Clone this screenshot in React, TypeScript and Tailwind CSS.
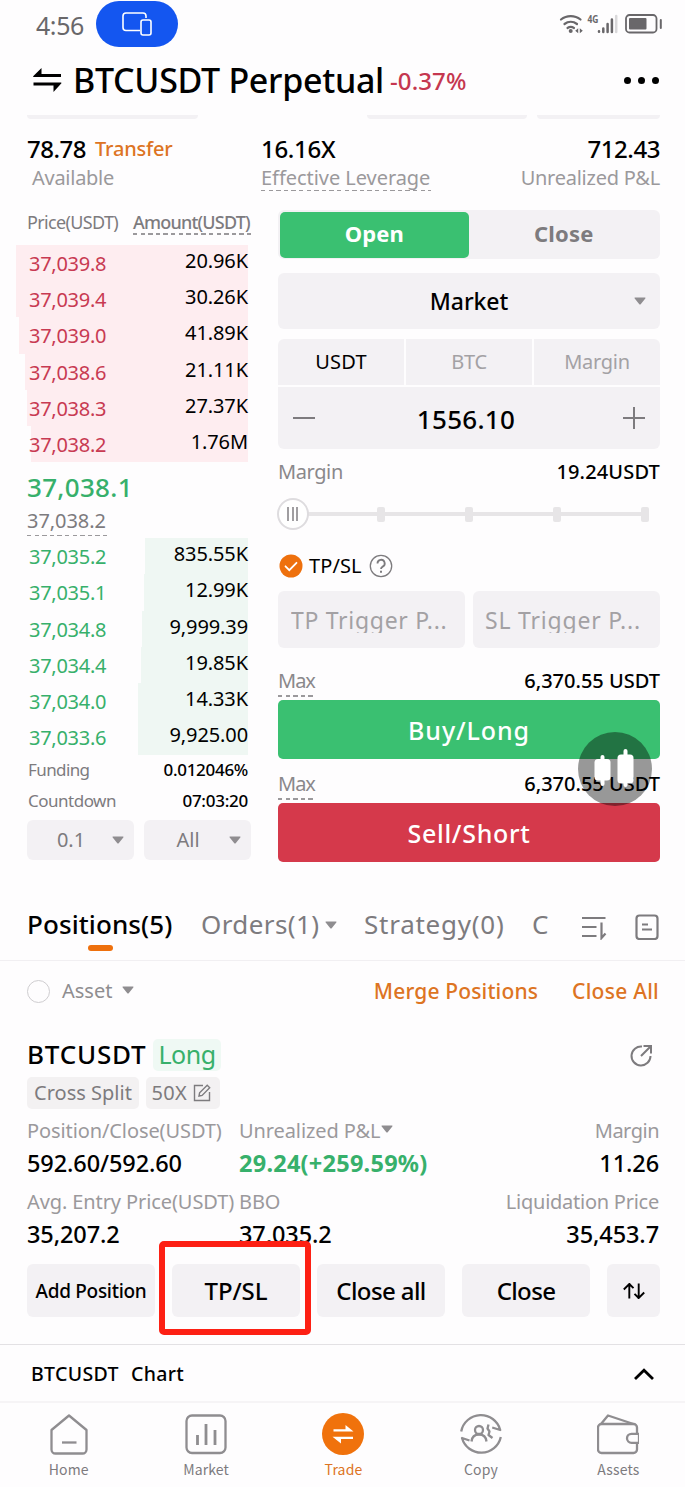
/**
 * Perpetual futures trading screen: order book, order form, open position
 * card and the bottom navigation.
 */
import type { ReactNode } from 'react'
import clsx from 'clsx'

type BookRow = { price: string; amount: string; bar: string }

const ASKS: BookRow[] = [
  { price: '37,039.8', amount: '20.96K', bar: 'w-[232px]' },
  { price: '37,039.4', amount: '30.26K', bar: 'w-[232px]' },
  { price: '37,039.0', amount: '41.89K', bar: 'w-[229px]' },
  { price: '37,038.6', amount: '21.11K', bar: 'w-[223px]' },
  { price: '37,038.3', amount: '27.37K', bar: 'w-[221px]' },
  { price: '37,038.2', amount: '1.76M', bar: 'w-[217px]' },
]

const BIDS: BookRow[] = [
  { price: '37,035.2', amount: '835.55K', bar: 'w-[103px]' },
  { price: '37,035.1', amount: '12.99K', bar: 'w-[104px]' },
  { price: '37,034.8', amount: '9,999.39', bar: 'w-[106px]' },
  { price: '37,034.4', amount: '19.85K', bar: 'w-[107px]' },
  { price: '37,034.0', amount: '14.33K', bar: 'w-[110px]' },
  { price: '37,033.6', amount: '9,925.00', bar: 'w-[110px]' },
]

const UNITS = ['USDT', 'BTC', 'Margin']

function Dashes({ className }: { className?: string }) {
  return (
    <span
      className={clsx(
        'absolute left-0 h-[1.5px] bg-[repeating-linear-gradient(90deg,#9b999c_0_4.4px,transparent_4.4px_7.6px)]',
        className,
      )}
    />
  )
}

function Caret({ className }: { className?: string }) {
  return (
    <svg viewBox="0 0 12 8" className={clsx('h-2 w-3 shrink-0 fill-[#8f8d90]', className)}>
      <path d="M1.2.5h9.6c.6 0 .9.6.5 1L6.7 7.2c-.4.4-1 .4-1.4 0L.7 1.5C.3 1.1.6.5 1.2.5z" />
    </svg>
  )
}

function Book({ rows, side }: { rows: BookRow[]; side: 'ask' | 'bid' }) {
  return (
    <div className="-ml-[11px] w-[232px]">
      {rows.map((r) => (
        <div key={r.price} className="relative flex h-[36.2px] items-center justify-between">
          <span
            className={clsx('absolute inset-y-0 right-0', r.bar, side === 'ask' ? 'bg-[#feedf0]' : 'bg-[#eff7f3]')}
          />
          <span
            className={clsx(
              'relative mt-[2px] pl-[13px] text-[20px] tracking-[-0.27px]',
              side === 'ask' ? 'text-[#c83a52]' : 'text-[#37b06b]',
            )}
          >
            {r.price}
          </span>
          <span className="relative -mt-[4px] text-[20px] tracking-[-0.1px] text-black">{r.amount}</span>
        </div>
      ))}
    </div>
  )
}

function StatusBar() {
  return (
    <div className="flex h-[50px] items-start pr-[22px] pl-[36px]">
      <span className="h-[50px] w-[60px] text-[25px] leading-[50px] tracking-[-0.43px] text-[#69676a]">4:56</span>
      <span className="mt-[1px] flex h-[45.5px] w-[82px] items-center justify-center rounded-full bg-[#1456f0]">
        <svg viewBox="0 0 30 24" className="h-6 w-[30px]" fill="none" stroke="#fff" strokeWidth="1.6">
          <path d="M18 18.5H4A3 3 0 0 1 1 15.5V4a3 3 0 0 1 3-3h17a3 3 0 0 1 3 3v2" />
          <rect x="19" y="8" width="10" height="15" rx="2" />
        </svg>
      </span>
      <svg viewBox="0 0 106 24" className="mt-[12px] ml-auto h-6 w-[106px]" fill="none" stroke="#69676a">
        <g strokeWidth="2.2" strokeLinecap="round">
          <path d="M4 7.5a15.5 15.5 0 0 1 19.5 0" />
          <path d="M7.5 12a10.5 10.5 0 0 1 12.5 0" />
          <path d="M10.5 16a6 6 0 0 1 6.5 0" />
        </g>
        <circle cx="13.7" cy="19" r="2" fill="#69676a" stroke="none" />
        <path d="M21.2 16.2v5l-3-2.5zM22.8 16.2v5l3-2.5z" fill="#69676a" stroke="none" />
        <text x="30.5" y="11" fill="#69676a" stroke="none" fontSize="10.5" fontWeight="700" textLength="11" lengthAdjust="spacingAndGlyphs">
          4G
        </text>
        <g strokeWidth="2.5" strokeLinecap="round">
          <path d="M42 19.2v.6M46.3 16.5v3.5M50.6 12v8M54.9 7.5v12.5" />
          <path d="M59.2 4v16" stroke="#d9d8da" />
        </g>
        <rect x="69" y="3" width="30.5" height="17.5" rx="3.5" strokeWidth="1.8" />
        <rect x="72" y="6" width="17.5" height="11.5" rx="1" fill="#69676a" stroke="none" />
        <path d="M103.8 8v8" strokeWidth="2" strokeLinecap="round" />
      </svg>
    </div>
  )
}

function Header() {
  return (
    <div className="flex h-[65px] items-center pr-[26px] pb-[5px] pl-[33px]">
      <svg viewBox="0 0 29 26" className="h-[26px] w-[29px]" fill="#000">
        <path d="M8.5 1v6H28v3H.8c-.6 0-.9-.7-.4-1.1z" />
        <path d="M20.5 25v-6.5H.5v-3h27.3c.6 0 .9.7.4 1.1z" />
      </svg>
      <h1 className="ml-[11px] w-[312px] text-[34px] leading-none font-[480] tracking-[-0.3px] whitespace-nowrap">
        BTCUSDT Perpetual
      </h1>
      <span className="mt-[2px] ml-[5px] text-[24px] leading-none font-[480] tracking-[0.1px] text-[#c5374f]">-0.37%</span>
      <span className="mt-[1px] ml-auto flex gap-[7px]">
        <i className="size-[7px] rounded-full bg-black" />
        <i className="size-[7px] rounded-full bg-black" />
        <i className="size-[7px] rounded-full bg-black" />
      </span>
    </div>
  )
}

function Summary() {
  return (
    <div className="grid h-[76px] grid-cols-[234px_1fr_auto] pr-[25px] pl-[27px]">
      <div>
        <div className="mt-[15px] flex h-[30px] items-center">
          <span className="w-[60px] text-[24px] font-[480] tracking-[-0.5px]">78.78</span>
          <span className="ml-[8px] text-[20px] font-[480] tracking-[-0.2px] text-[#dd7423]">Transfer</span>
        </div>
        <div className="pl-[5px] text-[20px] leading-[27px] tracking-[-0.27px] text-[#9b999c]">Available</div>
      </div>
      <div>
        <div className="mt-[15px] h-[30px] text-[24px] leading-[30px] font-[480] tracking-[-0.3px]">16.16X</div>
        <span className="relative inline-block text-[20px] leading-[27px] tracking-[-0.05px] text-[#9b999c]">
          Effective Leverage
          <Dashes className="top-[25.5px] w-[170px]" />
        </span>
      </div>
      <div className="text-right">
        <div className="mt-[15px] h-[30px] text-[24px] leading-[30px] font-[480] tracking-[-0.45px]">712.43</div>
        <div className="text-[20px] leading-[27px] tracking-[-0.25px] text-[#9b999c]">Unrealized P&amp;L</div>
      </div>
    </div>
  )
}

function OrderBook() {
  return (
    <div className="w-[224px]">
      <div className="flex h-[35px] justify-between pt-[1px] text-[18px] leading-[23px] text-[#7d7b7e]">
        <span className="tracking-[-0.65px]">Price(USDT)</span>
        <span className="relative w-[118px] font-[480] tracking-[-0.8px]">
          Amount(USDT)
          <Dashes className="top-[22px] w-[118px]" />
        </span>
      </div>
      <Book rows={ASKS} side="ask" />
      <div className="h-[76px] pt-[7px]">
        <div className="text-[26px] leading-[36px] font-[480] tracking-[0.3px] text-[#37b06b]">37,038.1</div>
        <div className="relative w-[80px] text-[20px] leading-[31px] tracking-[-0.05px] text-[#7d7b7e]">
          37,038.2
          <Dashes className="top-[29.5px] w-[80px]" />
        </div>
      </div>
      <Book rows={BIDS} side="bid" />
      <div className="flex h-[29px] items-center justify-between pr-[3px] text-[17px]">
        <span className="ml-[1px] tracking-[-0.6px] text-[#7d7b7e]">Funding</span>
        <span className="font-[480] tracking-[-0.3px]">0.012046%</span>
      </div>
      <div className="flex h-[32px] items-center justify-between pr-[3px] text-[17px]">
        <span className="ml-[1px] tracking-[-0.5px] text-[#7d7b7e]">Countdown</span>
        <span className="font-[480] tracking-[-0.25px]">07:03:20</span>
      </div>
      <div className="mt-[4px] flex gap-[10px] text-[20px] text-[#7d7b7e]">
        <div className="relative flex h-[40px] w-[107px] items-center justify-center rounded-md bg-[#f3f1f4] pr-[19px]">
          0.1
          <Caret className="absolute right-[10px]" />
        </div>
        <div className="relative flex h-[40px] w-[107px] items-center justify-center rounded-md bg-[#f3f1f4] pr-[19px]">
          All
          <Caret className="absolute right-[10px]" />
        </div>
      </div>
    </div>
  )
}

function MaxLine() {
  return (
    <div className="flex h-[37px] justify-between text-[20px] leading-[36px]">
      <span className="relative tracking-[-1px] text-[#8a888b]">
        Max
        <Dashes className="top-[32px] w-[35px]" />
      </span>
      <span className="font-[480]">6,370.55 USDT</span>
    </div>
  )
}

function OrderForm() {
  return (
    <div className="w-[382px]">
      <div className="grid h-[49px] grid-cols-2 rounded-md bg-[#f3f1f4] p-[1.5px] text-center text-[22px] leading-[43px] font-bold">
        <span className="rounded-[5px] bg-[#3ac071] tracking-[0.1px] text-white">Open</span>
        <span className="tracking-[0.2px] text-[#7d7b7e]">Close</span>
      </div>

      <div className="relative mt-[14px] flex h-[56px] items-center justify-center rounded-md bg-[#f3f1f4] text-[23px] font-[480] tracking-[-0.1px]">
        Market
        <Caret className="absolute right-[14px]" />
      </div>

      <div className="mt-[10px] grid h-[46px] grid-cols-3 gap-[2px] overflow-hidden rounded-t-md text-center text-[20px] leading-[46px]">
        {UNITS.map((u, i) => (
          <span
            key={u}
            className={clsx('bg-[#f3f1f4]', i === 0 ? 'tracking-[0.2px] text-black' : 'tracking-[-0.3px] text-[#a3a1a4]')}
          >
            {u}
          </span>
        ))}
      </div>
      <div className="mt-[2px] flex h-[62px] items-center justify-between rounded-b-md bg-[#f3f1f4] px-[15px] text-[26px] font-[480] tracking-[0.3px]">
        <svg viewBox="0 0 22 22" className="size-[22px]" stroke="#7d7b7e" strokeWidth="2">
          <path d="M0 11h22" />
        </svg>
        <span className="mr-[6px] pt-[2px]">1556.10</span>
        <svg viewBox="0 0 22 22" className="size-[22px]" stroke="#7d7b7e" strokeWidth="2">
          <path d="M0 11h22M11 0v22" />
        </svg>
      </div>

      <div className="mt-[6px] flex h-[33px] items-center justify-between text-[20px]">
        <span className="tracking-[-0.4px] text-[#8a888b]">Margin</span>
        <span className="font-[480] tracking-[0.15px]">19.24USDT</span>
      </div>

      <div className="relative mt-[9px] flex h-[34px] items-center">
        <span className="absolute right-[12px] left-[20px] h-[4px] bg-[#e7e5e7]" />
        <div className="relative flex w-[371px] items-center justify-between">
          <span className="-ml-[1.5px] flex size-8 items-center justify-center gap-[2.5px] rounded-full border-2 border-[#dedcdf] bg-white">
            <i className="h-[14px] w-[2px] bg-[#a09ea1]" />
            <i className="h-[14px] w-[2px] bg-[#a09ea1]" />
            <i className="h-[14px] w-[2px] bg-[#a09ea1]" />
          </span>
          <i className="-ml-[12px] h-[15px] w-[8px] rounded-[2px] bg-[#e7e5e7]" />
          <i className="h-[15px] w-[8px] rounded-[2px] bg-[#e7e5e7]" />
          <i className="h-[15px] w-[8px] rounded-[2px] bg-[#e7e5e7]" />
          <i className="h-[15px] w-[8px] rounded-[2px] bg-[#e7e5e7]" />
        </div>
      </div>

      <div className="mt-[19px] flex h-[32px] items-center">
        <svg viewBox="0 0 24 24" className="ml-[1px] size-6" fill="none">
          <circle cx="12" cy="12" r="11.5" fill="#ee700d" />
          <path d="M6.5 12.3l3.8 3.8 7.2-7.3" stroke="#fff" strokeWidth="1.8" strokeLinecap="round" />
        </svg>
        <span className="ml-[6px] text-[20px] tracking-[0.1px]">TP/SL</span>
        <svg viewBox="0 0 24 24" className="ml-[7px] size-6" fill="none" stroke="#7d7b7e">
          <circle cx="12" cy="12" r="10.7" strokeWidth="1.3" />
          <path d="M8.5 9.5a3.6 3.6 0 1 1 5.2 3.1c-1.2.7-1.7 1.1-1.7 2.5" strokeWidth="1.8" />
          <path d="M12 16.7v2" strokeWidth="2" />
        </svg>
      </div>

      <div className="mt-[9px] grid h-[57px] grid-cols-2 gap-2 text-[23px] text-[#a3a1a4]">
        <div className="flex items-center rounded-md bg-[#f3f1f4] pl-[13px]">
          <span className="h-[27px] overflow-hidden pt-[1px] leading-[27px] tracking-[0.7px]">TP Trigger P...</span>
        </div>
        <div className="flex items-center rounded-md bg-[#f3f1f4] pl-[12px]">
          <span className="h-[27px] overflow-hidden pt-[1px] leading-[27px] tracking-[0.8px]">SL Trigger P...</span>
        </div>
      </div>

      <div className="relative mt-[15px]">
        <MaxLine />
        <div className="h-[59px] rounded-[5px] bg-[#3ac071] text-center text-[25px] leading-[60px] font-[480] tracking-[0.9px] text-white">
          Buy/Long
        </div>
        <div className="mt-[7px]">
          <MaxLine />
        </div>
        <div className="h-[59px] rounded-[5px] bg-[#d5394b] text-center text-[25px] leading-[60px] font-[480] tracking-[0.7px] text-white">
          Sell/Short
        </div>
        {/* floating chart shortcut */}
        <div className="absolute top-[69px] right-[8px] size-[74px] rounded-full bg-black/40">
          <svg viewBox="0 0 74 74" className="size-[74px]" fill="#fff">
            <rect x="16.5" y="27" width="16" height="21.5" rx="3.5" />
            <rect x="22.5" y="23" width="4" height="31" rx="2" />
            <rect x="39.5" y="22.5" width="16" height="29" rx="3.5" />
            <rect x="45.5" y="17" width="4" height="38" rx="2" />
          </svg>
        </div>
      </div>
    </div>
  )
}

function PositionTabs() {
  return (
    <div className="mt-[34px] flex h-[66px] border-b border-[#f1eff2] pl-[27px] text-[26px] leading-[58px] text-[#7d7b7e]">
      <span className="relative w-[148px] font-[480] tracking-[0.1px] text-black">
        Positions(5)
        <i className="absolute top-[50px] left-[61px] h-[5.5px] w-[25px] rounded-full bg-[#ee700d]" />
      </span>
      <span className="ml-[26px] w-[119px] tracking-[0.4px]">Orders(1)</span>
      <Caret className="mt-[26px] ml-[5px]" />
      <span className="ml-[27px] w-[142px] tracking-[0.75px]">Strategy(0)</span>
      <span className="ml-[26px] w-[17px] overflow-hidden">C</span>
      <svg viewBox="0 0 26 24" className="mt-[21px] ml-[32px] h-6 w-[26px]" fill="none" stroke="#7d7b7e" strokeWidth="2.2">
        <path d="M1 2h23.5M1 11h14.5M1 20h14.5M20.500 6.5v15.5l4-4.5" />
      </svg>
      <svg viewBox="0 0 24 26" className="mt-[19px] ml-[28px] h-[26px] w-6" fill="none" stroke="#7d7b7e" strokeWidth="2.2">
        <rect x="1.5" y="1.5" width="21" height="23.5" rx="3" />
        <path d="M7 10.500h6M7 15.500h10" />
      </svg>
    </div>
  )
}

type StatProps = { label: ReactNode; value: string; className?: string; valueClass?: string }

function Stat({ label, value, className, valueClass }: StatProps) {
  return (
    <div className={className}>
      <div className="h-[29px] text-[20px] leading-[28px] tracking-[-0.1px] text-[#9b999c]">{label}</div>
      <div className={clsx('h-[36px] text-[23.5px] leading-[35px]', valueClass ?? 'font-[480] tracking-[-0.1px]')}>
        {value}
      </div>
    </div>
  )
}

function PositionCard() {
  return (
    <div className="pr-[25px] pl-[27px]">
      <div className="flex h-[60px] items-center">
        <span className="size-[23px] rounded-full border-[1.5px] border-[#cfcdd0]" />
        <span className="ml-[12px] text-[20px] text-[#8f8d90]">Asset</span>
        <Caret className="-mt-[2px] ml-[10px]" />
        <span className="mt-[2px] ml-auto text-[21px] font-[480] tracking-[0.15px] text-[#dd7423]">Merge Positions</span>
        <span className="mt-[2px] mr-[1px] ml-[34px] text-[21px] font-[480] tracking-[0.25px] text-[#dd7423]">Close All</span>
      </div>

      <div className="mt-[18px] flex h-[32px] items-center">
        <span className="-mt-[2px] w-[126px] text-[26px] font-[480] tracking-[0.8px]">BTCUSDT</span>
        <span className="flex h-[32px] w-[68px] items-center justify-center rounded-[5px] bg-[#eff9f4] text-[25px] tracking-[-0.5px] text-[#37b06b]">
          Long
        </span>
        <svg viewBox="0 0 24 24" className="mt-[2px] mr-[7px] ml-auto size-6" fill="none" stroke="#7d7b7e" strokeWidth="2">
          <path d="M13 2.5a9.5 9.5 0 1 0 8.5 9.5" />
          <path d="M12 12l9-9M14.5 2H22v7.5" />
        </svg>
      </div>

      <div className="mt-[6px] flex gap-[6.5px] text-[20px] leading-[32px] text-[#7d7b7e]">
        <span className="h-[32px] w-[112px] rounded-[5px] bg-[#f3f1f2] text-center">Cross Split</span>
        <span className="flex h-[32px] w-[74px] items-center rounded-[5px] bg-[#f3f1f2] pl-[6px] tracking-[0.3px]">
          50X
          <svg viewBox="0 0 18 18" className="ml-[6px] size-[18px]" fill="none" stroke="#7d7b7e" strokeWidth="1.4">
            <path d="M10 1.5H1.5v15h15V8" />
            <path d="M6 12l.6-3.200L14.2 1.2l2.5 2.5L9.1 11.4z" />
          </svg>
        </span>
      </div>

      <div className="mt-[8px] grid h-[71px] grid-cols-[212px_1fr_auto]">
        <Stat label="Position/Close(USDT)" value="592.60/592.60" />
        <Stat
          label={
            <span className="flex items-center gap-[1px]">
              Unrealized P&amp;L <Caret className="-mt-1" />
            </span>
          }
          value="29.24(+259.59%)"
          valueClass="font-bold tracking-[0.25px] text-[#37b06b]"
        />
        <Stat className="pr-[1px] text-right" label={<span className="tracking-[-0.5px]">Margin</span>} value="11.26" />
      </div>
      <div className="grid h-[76px] grid-cols-[212px_1fr_auto]">
        <Stat className="whitespace-nowrap" label="Avg. Entry Price(USDT)" value="35,207.2" />
        <Stat label="BBO" value="37,035.2" />
        <Stat
          className="pr-[1px] text-right"
          label={<span className="tracking-[-0.25px]">Liquidation Price</span>}
          value="35,453.7"
        />
      </div>

      <div className="flex h-[53px] justify-between text-center text-[24px] leading-[54px] font-[480]">
        <span className="w-[128px] rounded-md bg-[#f3f1f4] text-[19px] tracking-[-0.3px]">Add Position</span>
        <span className="relative w-[128px] rounded-md bg-[#f3f1f4] tracking-[-0.1px]">
          TP/SL
          <i className="absolute -top-[23px] -left-[13px] h-[94px] w-[152px] rounded-[5px] border-6 border-[#fd2014]" />
        </span>
        <span className="w-[128px] rounded-md bg-[#f3f1f4] tracking-[-0.6px]">Close all</span>
        <span className="w-[128px] rounded-md bg-[#f3f1f4] tracking-[-0.65px]">Close</span>
        <span className="flex w-[53px] items-center justify-center rounded-md bg-[#f3f1f4]">
          <svg viewBox="0 0 22 16" className="h-4 w-[22px]" fill="none" stroke="#000" strokeWidth="1.9">
            <path d="M.8 6.5L6.3 1v14.5M6.3 1l4.2 4.2M21.2 9.5L15.7 15V.5M15.7 15l-4.2-4.2" />
          </svg>
        </span>
      </div>
    </div>
  )
}

function NavItem({ label, active, children }: { label: string; active?: boolean; children: ReactNode }) {
  return (
    <div className="flex flex-col items-center pt-[10px]">
      <svg viewBox="0 0 42 42" className="h-[42px] w-[42px]" fill="none" stroke="#8f8d90" strokeWidth="2.3" strokeLinejoin="round">
        {children}
      </svg>
      <span
        className={clsx(
          'mt-[4px] font-["Noto_Sans_CJK_SC",sans-serif] text-[14px] leading-[20px] tracking-[0.15px]',
          active ? 'text-[#dd7423]' : 'text-[#7d7b7e]',
        )}
      >
        {label}
      </span>
    </div>
  )
}

function BottomNav() {
  return (
    <div className="grid h-[86px] w-[687px] grid-cols-5 border-t-2 border-[#f6f4f6]">
      <NavItem label="Home">
        <path d="M21 2.5L38.5 17v19.5a4 4 0 0 1-4 4h-27a4 4 0 0 1-4-4V17z" />
        <path d="M14 29.5h14.5" />
      </NavItem>
      <NavItem label="Market">
        <rect x="1.5" y="2.5" width="39" height="37.5" rx="5.5" />
        <path d="M12.5 22v10M21 11v21M30 17v15" strokeWidth="2.8" />
      </NavItem>
      <NavItem label="Trade" active>
        <circle cx="21" cy="21" r="21" fill="#f0720c" stroke="none" />
        <path d="M11.5 16.3h12v-4.2l8 6.5h-20zM31 23.7v2.4H19v4.3l-8.500-6.7z" fill="#fff" stroke="none" />
      </NavItem>
      <NavItem label="Copy">
        <path d="M1.2 18.5a20 20 0 0 1 39-1.5l-8-2.5M40.8 24a20 20 0 0 1-38.8 1l7.5 2.5" />
        <circle cx="19" cy="17" r="4" />
        <path d="M11.5 28.5c.5-4.500 3-7 7.5-7s7 2.500 7.5 7M28.5 11.5l-1 4 2 3-1 3.5 4 3" />
      </NavItem>
      <NavItem label="Assets">
        <rect x="1" y="11" width="39" height="29" rx="3.5" />
        <path d="M4 11l7-8.5L36.5 11" />
        <path d="M42 20.8h-7.5a4.5 4.5 0 0 0 0 9H42z" fill="#fefdfe" />
      </NavItem>
    </div>
  )
}

export default function App() {
  return (
    <div className='h-[1487px] w-[685px] overflow-hidden bg-[#fefdfe] font-["Noto_Sans",sans-serif] text-black'>
      <StatusBar />
      <Header />
      <div className="flex h-[4px] pl-[27px]">
        <i className="w-[171px] rounded-b-md bg-[#f3f1f4]" />
        <i className="ml-[169px] w-[160px] rounded-b-md bg-[#f3f1f4]" />
        <i className="ml-[10px] w-[123px] rounded-b-md bg-[#f3f1f4]" />
      </div>
      <Summary />
      <div className="flex h-[652px] items-start justify-between pt-[15px] pr-[25px] pl-[27px]">
        <OrderBook />
        <OrderForm />
      </div>
      <div className="h-[14px]" />
      <PositionTabs />
      <PositionCard />
      <div className="mt-[27px] flex h-[57px] items-center justify-between border-t-[1.5px] border-[#e3e1e4] pt-[2px] pr-[31px] pl-[31px]">
        <span className="text-[19.5px] font-[480] tracking-[0.35px]">
          BTCUSDT<span className="ml-[12px]">Chart</span>
        </span>
        <svg viewBox="0 0 20 12" className="h-3 w-5" fill="none" stroke="#000" strokeWidth="2.8">
          <path d="M1 11l9-8.8L19 11" />
        </svg>
      </div>
      <BottomNav />
    </div>
  )
}
